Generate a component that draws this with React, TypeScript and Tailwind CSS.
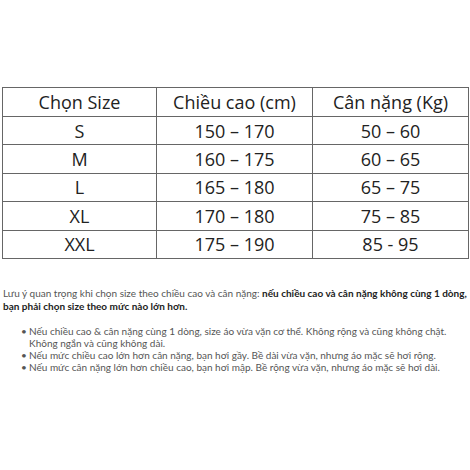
const rows = [
  ["S", "150 – 170", "50 – 60"],
  ["M", "160 – 175", "60 – 65"],
  ["L", "165 – 180", "65 – 75"],
  ["XL", "170 – 180", "75 – 85"],
  ["XXL", "175 – 190", "85 - 95"],
];

const notes = [
  "Nếu chiều cao & cân nặng cùng 1 dòng, size áo vừa vặn cơ thể. Không rộng và cũng không chật. Không ngắn và cũng không dài.",
  "Nếu mức chiều cao lớn hơn cân nặng, bạn hơi gầy. Bề dài vừa vặn, nhưng áo mặc sẽ hơi rộng.",
  "Nếu mức cân nặng lớn hơn chiều cao, bạn hơi mập. Bề rộng vừa vặn, nhưng áo mặc sẽ hơi dài.",
];

export default function App() {
  return (
    <div className="h-[470px] w-[470px] bg-white pt-[87px]">
      {/* Size table */}
      <div className="px-[2px]">
        <table className="w-[466px] table-fixed border-collapse font-['Open_Sans',sans-serif] text-[18px] text-[#222]">
          <colgroup>
            <col className="w-[154px]" />
            <col className="w-[156px]" />
            <col className="w-[156px]" />
          </colgroup>
          <thead>
            <tr className="h-[29px]">
              {["Chọn Size", "Chiều cao (cm)", "Cân nặng (Kg)"].map((h) => (
                <th key={h} className="border-[1.5px] border-[#666] p-0 text-center font-normal leading-[26px]">
                  {h}
                </th>
              ))}
            </tr>
          </thead>
          <tbody>
            {rows.map((r) => (
              <tr key={r[0]} className="h-[28.4px]">
                {r.map((c, i) => (
                  <td key={i} className="border-[1.5px] border-[#666] p-0 text-center leading-[26px]">
                    {c}
                  </td>
                ))}
              </tr>
            ))}
          </tbody>
        </table>
      </div>

      {/* Notes */}
      <div className="mt-[28px] px-[3px] font-['Lato',sans-serif] text-[10px] leading-[13px] text-[#555]">
        <p>
          Lưu ý quan trọng khi chọn size theo chiều cao và cân nặng:{" "}
          <b className="font-bold text-[#222]">
            nếu chiều cao và cân nặng không cùng 1 dòng, bạn phải chọn size theo mức nào lớn hơn.
          </b>
        </p>
        <ul className="mt-[12px] pl-[26px] pr-[2px]">
          {notes.map((n) => (
            <li key={n} className="relative leading-[12px]">
              <span className="absolute left-[-8px] top-0">•</span>
              {n}
            </li>
          ))}
        </ul>
      </div>
    </div>
  );
}
